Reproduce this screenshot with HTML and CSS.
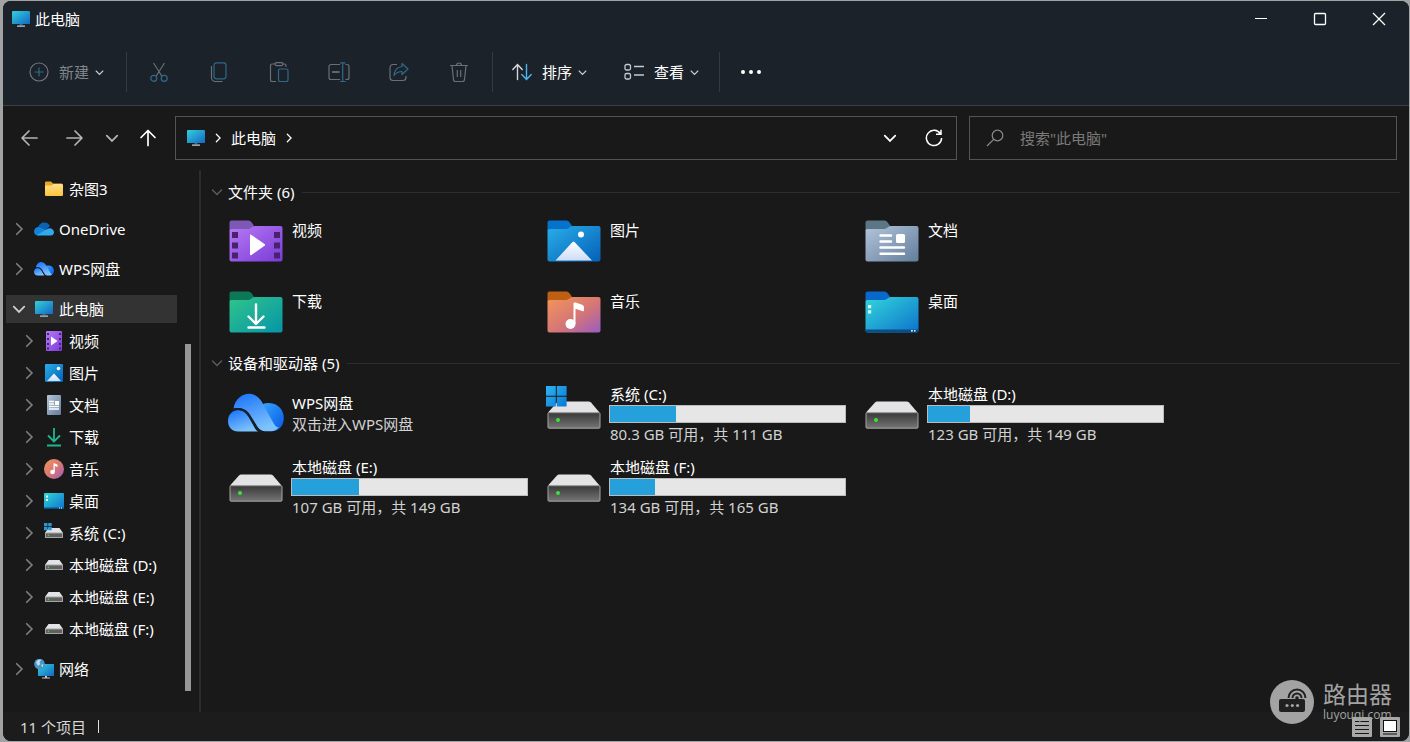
FILE: index.html
```html
<!DOCTYPE html>
<html lang="zh-CN">
<head>
<meta charset="utf-8">
<title>此电脑</title>
<link rel="stylesheet" href="styles.css">
</head>
<body>
<svg class="sprite" aria-hidden="true">
  <defs>
    <linearGradient id="g-screen" x1="0" y1="0" x2="1" y2="1"><stop offset="0" stop-color="#32d0dc"/><stop offset="1" stop-color="#1567c4"/></linearGradient>
    <linearGradient id="g-video" x1="0" y1="0" x2="1" y2="1"><stop offset="0" stop-color="#b77af5"/><stop offset="1" stop-color="#7a3bd6"/></linearGradient>
    <linearGradient id="g-pic" x1="0" y1="0" x2="1" y2="1"><stop offset="0" stop-color="#29aee8"/><stop offset="1" stop-color="#0560b8"/></linearGradient>
    <linearGradient id="g-doc" x1="0" y1="0" x2="1" y2="1"><stop offset="0" stop-color="#b3c5da"/><stop offset="1" stop-color="#637d9b"/></linearGradient>
    <linearGradient id="g-down" x1="0" y1="0" x2="1" y2="1"><stop offset="0" stop-color="#30c48b"/><stop offset="1" stop-color="#0595a8"/></linearGradient>
    <linearGradient id="g-music" x1="0" y1="0" x2="1" y2="1"><stop offset="0" stop-color="#f4955a"/><stop offset=".55" stop-color="#d57676"/><stop offset="1" stop-color="#9a5cc0"/></linearGradient>
    <linearGradient id="g-desk" x1="0" y1="0" x2="1" y2="1"><stop offset="0" stop-color="#32d6da"/><stop offset="1" stop-color="#0e72cc"/></linearGradient>
    <linearGradient id="g-peak" x1="0" y1="0" x2="0" y2="1"><stop offset="0" stop-color="#fff"/><stop offset="1" stop-color="#ccdcf7"/></linearGradient>
    <linearGradient id="g-drive" x1="0" y1="0" x2="0" y2="1"><stop offset="0" stop-color="#383838"/><stop offset="1" stop-color="#757575"/></linearGradient>
    <linearGradient id="g-win" x1="0" y1="0" x2="1" y2="1"><stop offset="0" stop-color="#2fb4f0"/><stop offset="1" stop-color="#0878d4"/></linearGradient>
    <linearGradient id="g-wps" x1="0" y1="0" x2=".5" y2="1"><stop offset="0" stop-color="#1670fa"/><stop offset="1" stop-color="#7cc2fd"/></linearGradient>
    <linearGradient id="g-wps2" x1="0" y1="0" x2="1" y2="1"><stop offset="0" stop-color="#35a4fb"/><stop offset="1" stop-color="#0858e8"/></linearGradient>
    <linearGradient id="g-yellow" x1="0" y1="0" x2="0" y2="1"><stop offset="0" stop-color="#ffe08a"/><stop offset="1" stop-color="#fbc33c"/></linearGradient>
  </defs>
  <symbol id="pc" viewBox="0 0 20 18"><path fill="url(#g-screen)" d="M2 1h16a1 1 0 0 1 1 1v12H1V2a1 1 0 0 1 1-1z"/><path fill="#1c6f9f" d="M8.500 14h3v1.500h-3z"/><path fill="#c4ccd2" d="M6 15.500h8v1.200H6z"/></symbol>
  <symbol id="down" viewBox="0 0 12 12"><path fill="none" stroke="currentColor" stroke-width="1.500" stroke-linecap="round" d="M1.500 4 6 8.500 10.500 4"/></symbol>
  <symbol id="right" viewBox="0 0 12 12"><path fill="none" stroke="currentColor" stroke-width="1.500" stroke-linecap="round" d="M4 1.500 8.500 6 4 10.500"/></symbol>
  <symbol id="tab" viewBox="0 0 56 44"><path d="M1.500 10V3.500a2 2 0 0 1 2-2h16c2 0 3 .6 4.200 2l2.300 3.200L22 12H1.500z"/></symbol>
  <symbol id="front" viewBox="0 0 56 44"><path d="M1.500 12a2 2 0 0 1 2-2h17c2.500 0 3.500-3 6-3h26a2 2 0 0 1 2 2v31.500a2 2 0 0 1-2 2h-49a2 2 0 0 1-2-2z"/></symbol>
  <symbol id="f-video" viewBox="0 0 56 44"><use href="#tab" fill="#7d59b5"/><use href="#front" fill="url(#g-video)"/><path fill="#47236f" d="M4 13h6v6H4zM4 23.500h6v6H4zM4 33.500h6v6H4zM46 13h6v6h-6zM46 23.500h6v6h-6zM46 33.500h6v6h-6z"/><path fill="#fff" d="M22 16.500q0-1.500 1.500-.6L36.500 25q1.200 1 0 1.800L23.500 36q-1.500.8-1.500-.8z"/></symbol>
  <symbol id="f-pic" viewBox="0 0 56 44"><use href="#tab" fill="#0672cc"/><use href="#front" fill="url(#g-pic)"/><path fill="url(#g-peak)" d="m9.500 41.500 17-18.500q1-1 2 0l17.500 18.500z"/><circle cx="35" cy="15.500" r="3" fill="#fff"/></symbol>
  <symbol id="f-doc" viewBox="0 0 56 44"><use href="#tab" fill="#5c7686"/><use href="#front" fill="url(#g-doc)"/><path fill="none" stroke="#fff" stroke-width="2.400" stroke-linecap="round" d="M16.500 16.500h10.500M16.500 22.500h10.500M16.500 28.500h23.500M16.500 34.800h23.500"/><rect x="32" y="15" width="9" height="9" rx="1.500" fill="#fff"/></symbol>
  <symbol id="f-down" viewBox="0 0 56 44"><use href="#tab" fill="#0d7857"/><use href="#front" fill="url(#g-down)"/><path fill="none" stroke="#fff" stroke-width="2.400" stroke-linecap="round" stroke-linejoin="round" d="M28 14.500v19M20.500 26.500 28 34l7.500-7.500M20.500 37.500h16"/></symbol>
  <symbol id="f-music" viewBox="0 0 56 44"><use href="#tab" fill="#bd6013"/><use href="#front" fill="url(#g-music)"/><circle cx="24.500" cy="34" r="5" fill="#fff"/><path fill="#fff" d="M27.500 34V13.500c0-1 1-1.300 2-1l6 2c1.800.6 2.500 1.500 2.500 3V20c0 1.500-1 1.500-2 1l-6.500-2.200V34z"/></symbol>
  <symbol id="f-desk" viewBox="0 0 56 44"><use href="#tab" fill="#0869ca"/><use href="#front" fill="url(#g-desk)"/><path fill="#0a4e86" d="M1.500 39.500h53v1a2 2 0 0 1-2 2h-49a2 2 0 0 1-2-2z"/><path fill="#d5fbff" d="M4 15h3.200v3.200H4zM4 20.200h3.200v3.200H4zM47 40h1.800v1.600H47zM50 40h1.500v1.600H50z"/></symbol>
  <symbol id="drive" viewBox="0 0 56 54"><path fill="#e3e3e6" d="M13 17.500h29.500q1.500 0 2.500 1l8.500 10H2l9-10q1-1 2-1z"/><rect x="2" y="28.700" width="52" height="15.500" rx="1" fill="url(#g-drive)" stroke="#a5a5a5"/><circle cx="12" cy="36" r="2" fill="#3be23b"/></symbol>
  <symbol id="drive-c" viewBox="0 0 56 54"><use href="#drive"/><path fill="url(#g-win)" d="M0 2h9.800v9.800H0zM10.800 2h9.800v9.800h-9.800zM0 12.800h9.800v9.800H0zM10.800 12.800h9.800v9.800h-9.800z"/></symbol>
  <symbol id="wps" viewBox="0 0 56 40"><path fill="url(#g-wps2)" d="M34 11.500C42 8 53 11 55.500 22 57 31 52 37 46 38L37 22z"/><path fill="url(#g-wps)" d="M5.500 15.500C7 5 16 0 22 .8 30 1.500 34 8 37 15l9 16c1.500 2.500 3 3.500 5 3-3 3-4.500 4.300-8.500 4.300h-5.500c-4 0-7-3-9-7l-7-11c-4-5-9-6-15.500-4.800z"/><path fill="url(#g-wps)" d="M0 28c0-7 5-11 10-11 6 0 8 3 11 7.500l5 9c1.500 3 2.500 4 4 5H10C4 38.500 0 34 0 28z"/><path fill="none" stroke="#16202c" stroke-width="1.800" d="M4.500 17.200C11 14.500 16.500 16.500 21 22.500l6 10.200c1.500 2.800 3 4.500 5.500 5.700"/></symbol>
  <symbol id="s-folder" viewBox="0 0 20 20"><path fill="#e8a526" d="M1 5V3.500a1 1 0 0 1 1-1h5l2 2h9v4H1z"/><path fill="url(#g-yellow)" d="M1 6.500h6.500l2-1.500H18a1 1 0 0 1 1 1v10a1 1 0 0 1-1 1H2a1 1 0 0 1-1-1z"/></symbol>
  <symbol id="s-one" viewBox="0 0 20 20"><path fill="#0a62b5" d="M4 9c1-6 9-7.500 12-2l-7 6-7-1z"/><path fill="#1283d8" d="M5 8c-3 0-5 2-5 4.500C0 15 2 16.500 4 16.500l10-4.500z"/><path fill="#31a9ee" d="m3 16 10-6c3-2 7 0 7 3.200 0 2-1.500 3.300-3.300 3.300H4z"/></symbol>
  <symbol id="s-video" viewBox="0 0 20 20"><rect x="2" width="16" height="20" rx="1" fill="url(#g-video)"/><path fill="#47236f" d="M3 2h2v2H3zM3 7h2v2H3zM3 12h2v2H3zM3 16.500h2v2H3zM15 2h2v2h-2zM15 7h2v2h-2zM15 12h2v2h-2zM15 16.500h2v2h-2z"/><path fill="#fff" d="m7 5.500 6.500 4.500L7 14.500z"/></symbol>
  <symbol id="s-pic" viewBox="0 0 20 20"><rect x="1" y="1" width="18" height="18" rx="1" fill="url(#g-pic)"/><path fill="url(#g-peak)" d="m3 18 7-7.500 7 7.500z"/><circle cx="14.500" cy="5.500" r="1.800" fill="#fff"/></symbol>
  <symbol id="s-doc" viewBox="0 0 20 20"><rect x="3" width="14" height="20" rx="1" fill="url(#g-doc)"/><path stroke="#fff" stroke-width="1.300" d="M5 6.500h5M5 9h5M5 11.500h10M5 14h10"/><path fill="#fff" d="M11 6h4v4h-4z"/></symbol>
  <symbol id="s-down" viewBox="0 0 20 20"><path fill="none" stroke="#21b58f" stroke-width="1.800" d="M10 1v13M4 8.500l6 6 6-6M3 18.500h14"/></symbol>
  <symbol id="s-music" viewBox="0 0 20 20"><circle cx="10" cy="10" r="10" fill="url(#g-music)"/><circle cx="8.500" cy="13" r="2.300" fill="#fff"/><path fill="#fff" d="M9.500 13V4l4 1.500V8l-2.700-1v6z"/></symbol>
  <symbol id="s-desk" viewBox="0 0 20 20"><rect y="2" width="20" height="16" rx="1" fill="url(#g-desk)"/><path fill="#e8ffff" d="M2 4.500h2v2H2zM2 8h2v2H2z"/><path fill="#0a4e86" d="M0 16.500h20V18H0z"/><path fill="#fff" d="M15 16.500h1v1h-1zM17 16.500h1v1h-1z"/></symbol>
  <symbol id="s-drive" viewBox="0 0 20 20"><path fill="#e3e3e6" d="M4.500 5h11l3.500 5H1z"/><rect x="1.500" y="10" width="17" height="4.500" fill="#606060" stroke="#a5a5a5"/><circle cx="4.500" cy="12.200" r=".8" fill="#3be23b"/></symbol>
  <symbol id="s-drive-c" viewBox="0 0 20 20"><use href="#s-drive"/><path fill="#2c97d6" d="M0 0h3.500v3.300H0zM4.200 0h3.500v3.300H4.200zM0 4h3.500v3.300H0zM4.200 4h3.500v3.300H4.200z"/></symbol>
  <symbol id="s-net" viewBox="0 0 20 20"><rect x="4" y="5" width="16" height="12" fill="url(#g-screen)"/><path fill="#c4ccd2" d="M11 17h2v1.500h3v1H8v-1h3z"/><circle cx="5.500" cy="5" r="5.300" fill="#4a94c6"/><path fill="#b9dcf0" d="M2 3.500C3 1 6 0 7 1L5.500 3.500 6.500 5 4 7zM7 6l2.500-1-1 3.500z"/></symbol>
</svg>

<div class="window">
  <header class="chrome">
    <div class="titlebar">
      <svg class="ico pc-ico"><use href="#pc"/></svg>
      <h1 class="title">此电脑</h1>
      <div class="controls">
        <button class="control" aria-label="最小化"><svg width="14" height="14" viewBox="0 0 14 14"><path stroke="#fff" stroke-width="1.200" d="M1 6.500h12"/></svg></button>
        <button class="control" aria-label="最大化"><svg width="14" height="14" viewBox="0 0 14 14"><rect x="1.500" y="1.500" width="11" height="11" rx="1" fill="none" stroke="#fff" stroke-width="1.300"/></svg></button>
        <button class="control" aria-label="关闭"><svg width="14" height="14" viewBox="0 0 14 14"><path stroke="#fff" stroke-width="1.300" d="m1 1 12 12M13 1 1 13"/></svg></button>
      </div>
    </div>
    <div class="toolbar">
      <button class="tool new" disabled>
        <svg class="ico" viewBox="0 0 20 20" fill="none"><circle cx="10" cy="10" r="9" stroke="#70767c" stroke-width="1.200"/><path stroke="#2f6b88" stroke-width="1.200" d="M10 5.500v9M5.500 10h9"/></svg>
        <span>新建</span><svg class="caret"><use href="#down"/></svg>
      </button>
      <div class="icon-tools">
        <button class="tool-icon" aria-label="剪切" disabled><svg class="ico" viewBox="0 0 20 20" fill="none" stroke-width="1.200"><path stroke="#697077" d="m4.500 1 8.300 13M15.500 1 7.200 14"/><circle cx="4.800" cy="16.300" r="3" stroke="#2f6b88"/><circle cx="15.200" cy="16.300" r="3" stroke="#2f6b88"/></svg></button>
        <button class="tool-icon" aria-label="复制" disabled><svg class="ico" viewBox="0 0 20 20" fill="none" stroke-width="1.200"><rect x="5" y=".8" width="12" height="16" rx="2.500" stroke="#2f6b88"/><path stroke="#697077" d="M2.500 4v11.500a4 4 0 0 0 4 4h7"/></svg></button>
        <button class="tool-icon" aria-label="粘贴" disabled><svg class="ico" viewBox="0 0 20 20" fill="none" stroke-width="1.200"><path stroke="#697077" d="M7 2H3a1.500 1.500 0 0 0-1.500 1.500v14.500A1.500 1.500 0 0 0 3 19.500h4M13 2h2.500A1.500 1.500 0 0 1 17 3.500V5"/><rect x="6" y=".6" width="8" height="3" rx="1.500" stroke="#697077"/><rect x="9.500" y="7" width="9.500" height="12.500" rx="1.500" stroke="#2f6b88"/></svg></button>
        <button class="tool-icon" aria-label="重命名" disabled><svg class="ico wide" viewBox="0 0 22 20" fill="none" stroke-width="1.200"><path stroke="#697077" d="M12 2.500H3A2 2 0 0 0 1 4.500v11a2 2 0 0 0 2 2h9M17.500 2.500H19a2 2 0 0 1 2 2v11a2 2 0 0 1-2 2h-1.500"/><path stroke="#2f6b88" d="M14.700 1v18.500M12 .8h5.500M12 19.500h5.500"/><path stroke="#6f8390" stroke-width="1.600" d="M4 10h7.500"/></svg></button>
        <button class="tool-icon" aria-label="共享" disabled><svg class="ico" viewBox="0 0 20 20" fill="none" stroke-width="1.200"><path stroke="#697077" d="M8 2.500H4a3 3 0 0 0-3 3v10a3 3 0 0 0 3 3h10a3 3 0 0 0 3-3V14"/><path stroke="#2f6b88" stroke-linejoin="round" d="m13 1.500 6 5.500-6 5.500V9.500c-4 0-6 1.500-8 4 .5-5 3-8.500 8-9z"/></svg></button>
        <button class="tool-icon" aria-label="删除" disabled><svg class="ico" viewBox="0 0 20 20" fill="none" stroke="#697077" stroke-width="1.200"><path d="M1 3.500h18M3 3.500l1.500 14a2 2 0 0 0 2 2h7a2 2 0 0 0 2-2L17 3.500M7.500 3.500a2.500 2.500 0 0 1 5 0M8.300 8v7M11.700 8v7"/></svg></button>
      </div>
      <button class="tool sort">
        <svg class="ico" viewBox="0 0 20 20" fill="none" stroke-width="1.400" stroke-linecap="round"><path stroke="#d5d9dc" d="M5.500 17.500V3M.8 7.500 5.500 2.500l4.700 5"/><path stroke="#4cb5ee" d="M14.500 2.500V17M9.800 12.500l4.700 5 4.700-5"/></svg>
        <span>排序</span><svg class="caret"><use href="#down"/></svg>
      </button>
      <button class="tool view">
        <svg class="ico" viewBox="0 0 20 20" fill="none" stroke="#c6cace" stroke-width="1.300"><rect x="1" y="2.500" width="5.500" height="5.500" rx="1.500"/><rect x="1" y="11.500" width="5.500" height="5.500" rx="1.500"/><path d="M10 4.500h10M10 13h10"/></svg>
        <span>查看</span><svg class="caret"><use href="#down"/></svg>
      </button>
      <button class="tool more" aria-label="更多"><svg class="ico wide" viewBox="0 0 22 20" fill="#fff"><circle cx="3" cy="10" r="2"/><circle cx="11" cy="10" r="2"/><circle cx="19" cy="10" r="2"/></svg></button>
    </div>
  </header>

  <div class="navbar">
    <nav class="history" aria-label="历史记录">
      <button class="hist dim" aria-label="后退"><svg class="ico" viewBox="0 0 20 20"><path d="M17 10H2.500M9 3l-7 7 7 7"/></svg></button>
      <button class="hist dim" aria-label="前进"><svg class="ico" viewBox="0 0 20 20"><path d="M3 10h14.500M11 3l7 7-7 7"/></svg></button>
      <button class="hist small dim" aria-label="最近"><svg class="chev"><use href="#down"/></svg></button>
      <button class="hist up" aria-label="向上"><svg class="ico" viewBox="0 0 20 20"><path d="M10 17.500V2.500M3 9.500l7-7 7 7"/></svg></button>
    </nav>
    <div class="address">
      <svg class="ico pc-ico"><use href="#pc"/></svg>
      <svg class="crumb-sep"><use href="#right"/></svg>
      <a class="crumb" href="#">此电脑</a>
      <svg class="crumb-sep"><use href="#right"/></svg>
      <div class="address-tools">
        <button class="addr-btn" aria-label="展开地址"><svg class="chev"><use href="#down"/></svg></button>
        <button class="addr-btn" aria-label="刷新"><svg width="18" height="18" viewBox="0 0 18 18" fill="none" stroke="#fff" stroke-width="1.500"><path d="M15.500 5A7.600 7.600 0 1 0 16.600 9M11 5.200h5V.8"/></svg></button>
      </div>
    </div>
    <label class="search">
      <svg class="ico" viewBox="0 0 20 20" fill="none" stroke="#8a8a8a" stroke-width="1.200"><circle cx="12.500" cy="7.500" r="5.300"/><path d="M8.700 11.300 2 18"/></svg>
      <input type="search" placeholder='搜索"此电脑"' aria-label="搜索">
    </label>
  </div>

  <div class="body">
    <nav class="sidebar" aria-label="导航窗格">
      <div class="tree">
        <a class="node child" href="#"><svg class="twist"></svg><svg class="ico"><use href="#s-folder"/></svg>杂图3</a>
        <a class="node root" href="#"><svg class="twist"><use href="#right"/></svg><svg class="ico"><use href="#s-one"/></svg>OneDrive</a>
        <a class="node root" href="#"><svg class="twist"><use href="#right"/></svg><svg class="ico"><use href="#wps"/></svg>WPS网盘</a>
        <a class="node root selected" href="#"><svg class="twist"><use href="#down"/></svg><svg class="ico"><use href="#pc"/></svg>此电脑</a>
        <a class="node child" href="#"><svg class="twist"><use href="#right"/></svg><svg class="ico"><use href="#s-video"/></svg>视频</a>
        <a class="node child" href="#"><svg class="twist"><use href="#right"/></svg><svg class="ico"><use href="#s-pic"/></svg>图片</a>
        <a class="node child" href="#"><svg class="twist"><use href="#right"/></svg><svg class="ico"><use href="#s-doc"/></svg>文档</a>
        <a class="node child" href="#"><svg class="twist"><use href="#right"/></svg><svg class="ico"><use href="#s-down"/></svg>下载</a>
        <a class="node child" href="#"><svg class="twist"><use href="#right"/></svg><svg class="ico"><use href="#s-music"/></svg>音乐</a>
        <a class="node child" href="#"><svg class="twist"><use href="#right"/></svg><svg class="ico"><use href="#s-desk"/></svg>桌面</a>
        <a class="node child" href="#"><svg class="twist"><use href="#right"/></svg><svg class="ico"><use href="#s-drive-c"/></svg>系统 (C:)</a>
        <a class="node child" href="#"><svg class="twist"><use href="#right"/></svg><svg class="ico"><use href="#s-drive"/></svg>本地磁盘 (D:)</a>
        <a class="node child" href="#"><svg class="twist"><use href="#right"/></svg><svg class="ico"><use href="#s-drive"/></svg>本地磁盘 (E:)</a>
        <a class="node child" href="#"><svg class="twist"><use href="#right"/></svg><svg class="ico"><use href="#s-drive"/></svg>本地磁盘 (F:)</a>
        <a class="node root" href="#"><svg class="twist"><use href="#right"/></svg><svg class="ico"><use href="#s-net"/></svg>网络</a>
      </div>
      <div class="scroll"><div class="thumb"></div></div>
    </nav>

    <main class="content">
      <section class="group">
        <h2 class="group-head"><svg class="twist"><use href="#down"/></svg>文件夹 (6)</h2>
        <div class="grid">
          <a class="folder" href="#"><svg class="folder-ico"><use href="#f-video"/></svg><span class="name">视频</span></a>
          <a class="folder" href="#"><svg class="folder-ico"><use href="#f-pic"/></svg><span class="name">图片</span></a>
          <a class="folder" href="#"><svg class="folder-ico"><use href="#f-doc"/></svg><span class="name">文档</span></a>
          <a class="folder" href="#"><svg class="folder-ico"><use href="#f-down"/></svg><span class="name">下载</span></a>
          <a class="folder" href="#"><svg class="folder-ico"><use href="#f-music"/></svg><span class="name">音乐</span></a>
          <a class="folder" href="#"><svg class="folder-ico"><use href="#f-desk"/></svg><span class="name">桌面</span></a>
        </div>
      </section>
      <section class="group">
        <h2 class="group-head"><svg class="twist"><use href="#down"/></svg>设备和驱动器 (5)</h2>
        <div class="grid">
          <a class="drive cloud" href="#"><svg class="cloud-ico"><use href="#wps"/></svg><span class="info"><span class="name">WPS网盘</span><span class="free">双击进入WPS网盘</span></span></a>
          <a class="drive" href="#"><svg class="drive-ico"><use href="#drive-c"/></svg><span class="info"><span class="name">系统 (C:)</span><span class="bar"><span class="used" style="width:28%"></span></span><span class="free">80.3 GB 可用，共 111 GB</span></span></a>
          <a class="drive" href="#"><svg class="drive-ico"><use href="#drive"/></svg><span class="info"><span class="name">本地磁盘 (D:)</span><span class="bar"><span class="used" style="width:18%"></span></span><span class="free">123 GB 可用，共 149 GB</span></span></a>
          <a class="drive" href="#"><svg class="drive-ico"><use href="#drive"/></svg><span class="info"><span class="name">本地磁盘 (E:)</span><span class="bar"><span class="used" style="width:28.500%"></span></span><span class="free">107 GB 可用，共 149 GB</span></span></a>
          <a class="drive" href="#"><svg class="drive-ico"><use href="#drive"/></svg><span class="info"><span class="name">本地磁盘 (F:)</span><span class="bar"><span class="used" style="width:19%"></span></span><span class="free">134 GB 可用，共 165 GB</span></span></a>
        </div>
      </section>
    </main>
  </div>

  <footer class="status">
    <span class="count">11 个项目</span>
    <div class="modes">
      <button class="mode" aria-label="详细信息"><svg width="20" height="20" viewBox="0 0 20 20"><rect width="20" height="20" rx="1" fill="#a8a8a8"/><path stroke="#151515" stroke-width="1.200" d="M3 4.500h14M3 8.500h14M3 12.500h14M3 16.500h14"/></svg></button>
      <button class="mode" aria-label="大图标"><svg width="20" height="20" viewBox="0 0 20 20"><rect width="20" height="20" rx="1" fill="#a8a8a8"/><rect x="3.500" y="3.500" width="13" height="11" fill="#fff" stroke="#111"/><path stroke="#111" d="M3 17h14"/></svg></button>
    </div>
  </footer>
  <div class="watermark">
    <svg width="44" height="44" viewBox="0 0 44 44"><circle cx="22" cy="22" r="22" fill="#a3a3a3"/><rect x="9" y="19" width="26" height="13" rx="2" fill="#202020"/><circle cx="17" cy="25.500" r="1.600" fill="#a3a3a3"/><circle cx="22.300" cy="25.500" r="1.600" fill="#a3a3a3"/><circle cx="27.600" cy="25.500" r="1.600" fill="#a3a3a3"/><path fill="none" stroke="#202020" stroke-width="2" d="M18.500 18a8.500 8.500 0 0 1 17 0M22.500 18a4.500 4.500 0 0 1 9 0"/><circle cx="27" cy="18" r="1.800" fill="#202020"/></svg>
    <div class="mark-text"><span class="mark-name">路由器</span><span class="mark-url">luyouqi.com</span></div>
  </div>
</div>
</body>
</html>
```
FILE: styles.css
```css
* { box-sizing: border-box; }

body {
  margin: 0;
  height: 100vh;
  padding: 1px 1px 1px 3px;
  background: #a0a2a3;
  font: 15px/20px "Noto Sans", "Noto Sans CJK SC", sans-serif;
  color: #fff;
}

button {
  display: flex;
  align-items: center;
  justify-content: center;
  padding: 0;
  border: 0;
  background: none;
  color: inherit;
  font: inherit;
}

a { color: inherit; text-decoration: none; }
svg { display: block; flex: none; }
.sprite { position: absolute; width: 0; height: 0; }

.ico { width: 20px; height: 20px; }
.ico.wide { width: 22px; }
.ico.pc-ico { height: 18px; }
.caret { width: 9px; height: 9px; color: #c8ccd0; }
.chev { width: 14px; height: 14px; }

.window {
  position: relative;
  display: flex;
  flex-direction: column;
  height: 100%;
  overflow: hidden;
  border-radius: 8px;
  background: #191919;
}

/* title bar and commands */
.chrome { background: #1b2229; border-bottom: 1px solid #3c3f42; }
.titlebar { display: flex; align-items: center; height: 36px; padding-left: 8px; }
.title { margin: 0 0 0 4px; font-size: 15px; font-weight: 400; }
.controls { display: flex; margin-left: auto; padding-right: 1px; align-self: stretch; }
.control { width: 59px; }

.toolbar { display: flex; align-items: center; height: 68px; padding-top: 2px; }
.tool { height: 40px; }
.tool span { margin: 0 6px 0 10px; }
.new { padding: 0 22px 0 26px; border-right: 1px solid #343a40; color: #7f858a; }
.icon-tools { display: flex; padding: 0 3px 0 2px; border-right: 1px solid #343a40; }
.tool-icon { width: 60px; height: 40px; }
.sort { padding: 0 19px; }
.view { padding: 0 20px 0 18px; border-right: 1px solid #343a40; }
.more { padding: 0 20px; }

/* address row */
.navbar { display: flex; padding: 10px 12px 10px 5px; }
.history { display: flex; margin-right: 7px; }
.hist { width: 44px; }
.hist.small { width: 32px; }
.hist.up { width: 40px; }
.hist.dim { color: #b4b4b4; }
.hist .ico { fill: none; stroke: currentColor; stroke-width: 1.7; stroke-linecap: round; stroke-linejoin: round; }

.address, .search { display: flex; align-items: center; height: 44px; border: 1px solid #545454; }
.address { flex: 770 1 0; padding-left: 10px; }
.crumb-sep { width: 10px; height: 10px; margin: 0 8px 0 7px; }
.crumb { margin-right: 1px; }
.address-tools { display: flex; margin-left: auto; align-self: stretch; }
.addr-btn { width: 44px; }
.search { flex: 396 1 0; margin-left: 12px; padding: 0 15px; gap: 15px; }
.search input { flex: 1; min-width: 0; padding: 0; border: 0; outline: 0; background: none; color: #fff; font: inherit; }
.search input::placeholder { color: #7a7a7a; opacity: 1; }

/* navigation pane */
.body { display: flex; flex: 1; min-height: 0; }
.sidebar { display: flex; flex: none; border-right: 2px solid #2b2b2b; }
.tree { display: flex; flex-direction: column; gap: 4px; width: 174px; padding: 5px 0 0 3px; }
.node { display: flex; align-items: center; flex: none; height: 28px; white-space: nowrap; }
.node .ico { margin: 0 5px 0 8px; }
.twist { width: 14px; height: 14px; color: #7c7c7c; }
.root { padding-left: 6px; }
.child { padding-left: 16px; }
.child + .root, .root + .root { margin-top: 8px; }
.selected { background: #333; }
.selected .twist { color: #d0d0d0; }
.scroll { display: flex; flex-direction: column; width: 22px; padding: 0 8px; }
.scroll::before { content: ""; flex: 174; }
.scroll::after { content: ""; flex: 21; }
.thumb { flex: 347; background: #969696; }

/* file list */
.content { flex: 1; min-width: 0; padding: 10px 9px 0 10px; }
.group + .group { margin-top: 4px; }
.group-head { display: flex; align-items: center; height: 24px; margin: 0 0 1px; font-size: 15px; font-weight: 400; }
.group-head .twist { width: 12px; height: 12px; margin-right: 5px; color: #5c5c5c; }
.group-head::after { content: ""; flex: 1; height: 1px; margin-left: 8px; background: #2e2e2e; }
.grid { display: grid; grid-template-columns: repeat(auto-fill, 318px); padding-left: 17px; }
.folder { display: flex; height: 71px; padding-top: 14px; gap: 8px; }
.folder-ico { width: 56px; height: 44px; }
.folder .name { padding-top: 1px; }
.drive { display: flex; height: 73px; padding-top: 8px; gap: 7px; }
.drive-ico { width: 56px; height: 54px; }
.cloud-ico { width: 56px; height: 40px; }
.info { display: flex; flex-direction: column; width: 237px; }
.info .name, .info .free { padding-left: 1px; white-space: nowrap; }
.free { color: #d2d2d2; }
.bar { height: 18px; margin: 1px 0; border: 1px solid #bcbcbc; background: #e6e6e6; }
.used { display: block; height: 100%; background: #26a0da; }
.cloud { padding: 17px 0 0; }
.cloud .free { margin-top: 1px; }

/* status bar */
.status { display: flex; align-items: center; justify-content: space-between; height: 29px; padding: 0 9px 0 17px; background: #1c1c1c; color: #d8d8d8; }
.count { display: flex; align-items: center; }
.count::after { content: ""; width: 1px; height: 13px; margin-left: 12px; background: #e0e0e0; }
.modes { display: flex; gap: 8px; }

.watermark { position: absolute; right: 17px; bottom: 17px; display: flex; gap: 9px; color: #a3a3a3; pointer-events: none; }
.mark-text { display: flex; flex-direction: column; }
.mark-name { font-size: 23px; line-height: 28px; }
.mark-url { font: 12px/14px "Open Sans", sans-serif; }
```
